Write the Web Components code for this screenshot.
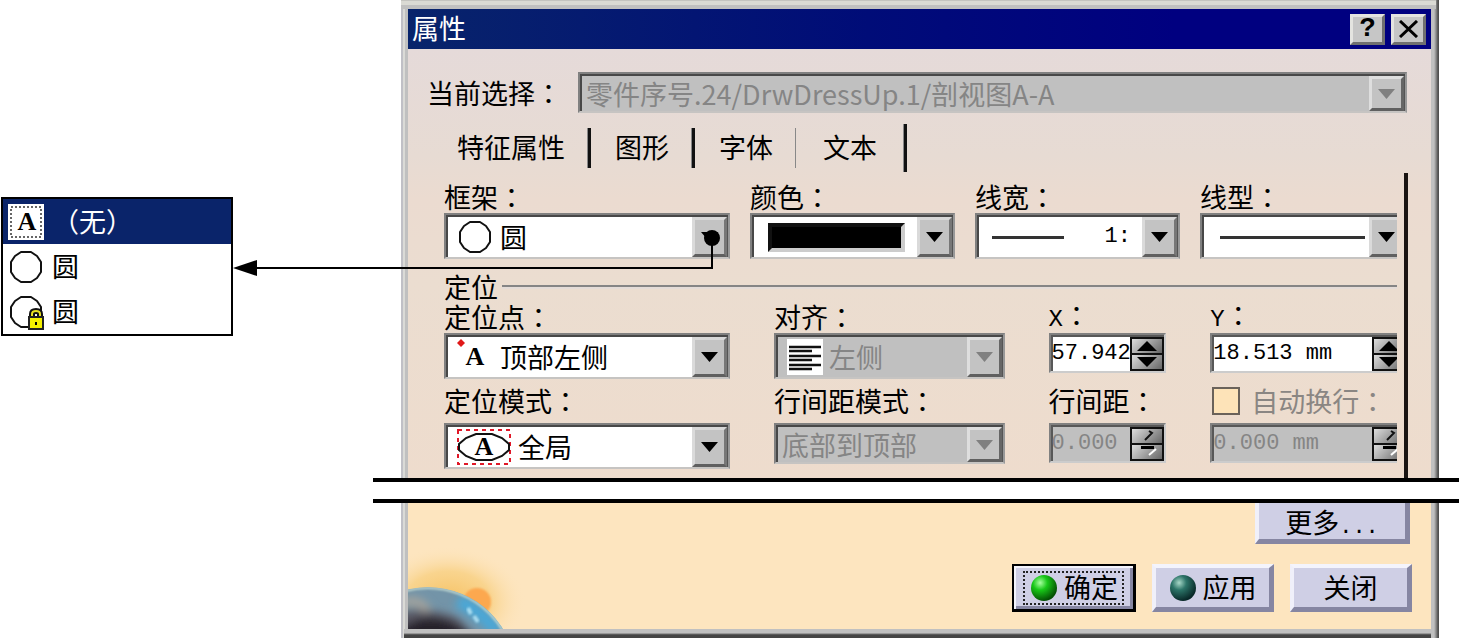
<!DOCTYPE html>
<html lang="zh-Hans">
<head>
<meta charset="utf-8">
<title>属性</title>
<style>
  body { margin: 0; background: #fff; color: #000; font: 27px/28px "Noto Sans CJK SC", "Noto Sans CJK TC", sans-serif; }
</style>
</head>
<body>
<property-figure></property-figure>

<template id="figure-tpl">
  <style>
    :host { display: flex; position: relative; min-height: 100vh; align-items: flex-start; overflow: hidden; }
    .side { flex: 0 0 401px; padding: 197px 0 0 1px; box-sizing: border-box; }
    property-dialog { flex: 1; min-width: 0; margin-right: 20px; }
    .arrow { position: absolute; left: 232px; top: 226px; pointer-events: none; }
  </style>
  <div class="side"><frame-list></frame-list></div>
  <property-dialog></property-dialog>
  <svg class="arrow" width="490" height="52" aria-hidden="true">
    <path d="M480 12V42H20" fill="none" stroke="#000" stroke-width="2"/>
    <path d="M1 42L25 34V50Z"/>
    <circle cx="480" cy="12" r="8"/>
  </svg>
</template>

<template id="list-tpl">
  <style>
    :host { display: block; width: 232px; box-sizing: border-box; border: 2px solid #000; background: #fff; }
    ul { margin: 0; padding: 0; list-style: none; }
    li { display: flex; align-items: center; gap: 8px; height: 45px; padding-left: 5px; }
    li span { padding-bottom: 2px; }
    li[aria-selected="true"] { background: #0a246a; color: #fff; }
  </style>
  <ul role="listbox" aria-label="框架">
    <li role="option" aria-selected="true"><ui-icon name="none"></ui-icon><span>（无）</span></li>
    <li role="option" aria-selected="false"><ui-icon name="circle"></ui-icon><span>圆</span></li>
    <li role="option" aria-selected="false"><ui-icon name="locked"></ui-icon><span>圆</span></li>
  </ul>
</template>

<template id="dialog-tpl">
  <style>
    :host { display: block; }
    .frame { padding: 0 8px 0 7px; background: linear-gradient(90deg, #c0c0c6 0 2px, #dadad6 2px 4px, #c0c0c0 4px calc(100% - 5px), #8c8c8c calc(100% - 3px), #505050 calc(100% - 1px)); }
    .head { height: 9px; margin: 0 -5px 0 -7px; background: linear-gradient(#c4c4c0 0 1px, #dadad4 1px 5px, #c0c0c0 5px); }
    header { display: flex; align-items: center; gap: 6px; height: 40px; padding: 0 5px 0 4px; background: linear-gradient(90deg, #08246b, #000c78 45%, #000080 75%); color: #fff; }
    h1 { flex: 1; margin: 0; padding-bottom: 2px; font-size: 27px; line-height: 28px; font-weight: 400; }
    header button { display: grid; place-items: center; width: 35px; height: 31px; padding: 0; border: 3px solid; border-color: #e4e4e0 #707070 #707070 #e4e4e0; background: #c6c6c6; color: #000; font: 700 27px/24px "Liberation Mono", monospace; }
    .body { padding: 23px 23px 0 0; background: linear-gradient(#e5dad9, #e7dbd3 25%, #ebdbd0 35%, #ebddd0 55%, #eedccd); }
    .current { margin: 0 1px 0 19px; }
    nav { display: flex; align-items: center; height: 48px; margin: 11px 0 1px 49px; }
    nav button { padding: 0 0 2px; border: 0; background: none; color: #000; font: inherit; }
    nav i { width: 4px; height: 40px; margin: 0 24px 0 22px; box-sizing: border-box; border-left: 1px solid #888; background: #111; }
    nav i.thin { background: none; }
    nav i.last { height: 48px; margin: 0 0 0 26px; }
    .panel { border-right: 4px solid #1a1412; padding: 10px 7px 9px 36px; }
    .row { display: grid; column-gap: 44px; grid-template-columns: 286px 231fr 118fr 187fr; }
    .row.a { column-gap: 20px; grid-template-columns: 286px 205fr 205fr 197fr; }
    .row.c { margin-top: 8px; --label-gap: 8px; }
    h2 { display: flex; align-items: center; gap: 4px; margin: 14px 0 2px; font-size: 27px; line-height: 28px; font-weight: 400; }
    h2::after { content: ""; flex: 1; height: 2px; background: #858585; border-bottom: 2px solid #e4dcd8; }
    .break { height: 17px; margin: 0 -20px 0 -28px; border: solid #000; border-width: 4px 0; background: #fff; position: relative; }
    footer { position: relative; padding: 0 19px 17px; background: #fde5bf; }
    .bottom { height: 9px; margin: 0 0 0 -4px; background: linear-gradient(#c0c0c0 0 4px, #707070 5px, #444 6px); }
    .more, .actions { display: flex; justify-content: flex-end; gap: 16px; position: relative; }
    .more { height: 41px; margin-bottom: 20px; padding-right: 2px; }
    .planet { position: absolute; left: 0; bottom: 0; }
    .swatch { height: 21px; margin: 0 12px 0 14px; border: 4px solid; border-color: #111 #ccc #ccc #111; background: #000; outline: 0; }
    .line { height: 3px; background: #333; }
    .line.short { width: 72px; margin-left: 13px; }
    .line.long { margin: 0 4px 0 16px; }
  </style>
  <section class="frame">
    <div class="head"></div>
    <header><h1>属性</h1>
      <button aria-label="帮助">?</button>
      <button aria-label="关闭窗口"><svg width="20" height="18" viewBox="0 0 20 18"><path d="M1 1L18 17M18 1L1 17" stroke="#000" stroke-width="3"/></svg></button>
    </header>
    <div class="body">
      <combo-field class="current" inline disabled label="当前选择" value="零件序号.24/DrwDressUp.1/剖视图A-A"></combo-field>
      <nav>
        <button>特征属性</button><i></i><button>图形</button><i></i><button>字体</button><i class="thin"></i><button>文本</button><i class="last"></i>
      </nav>
      <div class="panel">
        <div class="row a">
          <combo-field label="框架" value="圆" style="--start: 52px"><ui-icon name="circle" style="margin-left: 9px"></ui-icon></combo-field>
          <combo-field label="颜色" value=""><div class="swatch"></div></combo-field>
          <combo-field label="线宽" value="1:" right><div class="line short"></div></combo-field>
          <combo-field label="线型" value="" clipped><div class="line long"></div></combo-field>
        </div>
        <h2>定位</h2>
        <div class="row">
          <combo-field label="定位点" value="顶部左侧" style="--start: 52px"><ui-icon name="anchor" style="margin-left: 8px"></ui-icon></combo-field>
          <combo-field label="对齐" value="左侧" disabled style="--start: 51px"><ui-icon name="align" style="margin-left: 9px"></ui-icon></combo-field>
          <spin-field label="X" value="57.942"></spin-field>
          <spin-field label="Y" value="18.513 mm" clipped></spin-field>
        </div>
        <div class="row c">
          <combo-field label="定位模式" value="全局" style="--start: 70px"><ui-icon name="global" style="margin-left: 8px"></ui-icon></combo-field>
          <combo-field label="行间距模式" value="底部到顶部" disabled compact></combo-field>
          <spin-field label="行间距" value="0.000" disabled></spin-field>
          <spin-field label="自动换行" value="0.000 mm" disabled checkable clipped></spin-field>
        </div>
      </div>
    </div>
  </section>
  <div class="break"></div>
  <section class="frame">
    <footer>
      <svg class="planet" width="160" height="127" viewBox="0 0 160 127" aria-hidden="true">
        <defs>
          <radialGradient id="glow"><stop offset="0" stop-color="#f6c060"/><stop offset=".55" stop-color="#f8d082" stop-opacity=".8"/><stop offset="1" stop-color="#fde5bf" stop-opacity="0"/></radialGradient>
          <filter id="soft" x="-40%" y="-40%" width="180%" height="180%"><feGaussianBlur stdDeviation="4"/></filter>
          <filter id="edge" x="-20%" y="-20%" width="140%" height="140%"><feGaussianBlur stdDeviation="1"/></filter>
          <clipPath id="disc"><circle cx="20" cy="173" r="88"/></clipPath>
        </defs>
        <ellipse cx="40" cy="100" rx="78" ry="56" fill="url(#glow)"/>
        <circle cx="69" cy="100" r="14" fill="#fca850" filter="url(#edge)"/>
        <g clip-path="url(#disc)">
          <circle cx="20" cy="173" r="88" fill="#7394a8"/>
          <g filter="url(#soft)">
            <path d="M-10 110Q20 104 50 116L72 140H-10Z" fill="#5a5864"/>
            <path d="M-10 128Q10 112 30 116Q50 118 68 140H-10Z" fill="#26242c"/>
            <path d="M-6 102Q8 94 20 108" fill="none" stroke="#a8a49c" stroke-width="8"/>
            <path d="M50 99Q72 108 90 130" fill="none" stroke="#4aa8d8" stroke-width="14"/>
          </g>
          <path d="M60 106L63 112M66 114L70 120" fill="none" stroke="#a8dcf0" stroke-width="4" filter="url(#edge)"/>
          <circle cx="20" cy="173" r="87" fill="none" stroke="#c4dcd4" stroke-width="2" filter="url(#edge)"/>
        </g>
      </svg>
      <div class="more"><push-button style="--w: 155px; --h: 41px; --top: 0px; --drop: 10px">更多<span style="font: 22px/28px 'Liberation Mono', monospace">...</span></push-button></div>
      <div class="actions">
        <push-button default style="--w: 124px"><ui-icon slot="icon" name="ball-on"></ui-icon>确定</push-button>
        <push-button style="--w: 122px"><ui-icon slot="icon" name="ball-off"></ui-icon>应用</push-button>
        <push-button style="--w: 122px">关闭</push-button>
      </div>
    </footer>
    <div class="bottom"></div>
  </section>
</template>

<template id="button-tpl">
  <style>
    :host { display: block; }
    button { display: flex; align-items: center; justify-content: center; box-sizing: border-box; width: var(--w); height: var(--h, 48px); padding: var(--drop, 0) 0 0; border: 4px solid; border-width: var(--top, 4px) 5px 5px 4px; border-color: #f4f4fc #8686a2 #8686a2 #f0f0fa; background: #cfcfe5; color: #000; font: inherit; }
    .in { display: flex; align-items: center; gap: 6px; }
    .text { padding-bottom: 2px; }
    :host([default]) button { border: 2px solid #000; border-width: 2px 3px 3px 2px; box-shadow: inset 2px 2px #f4f4fc, inset -3px -3px #8686a2; }
    :host([default]) .in { padding: 0 4px 0 5px; outline: 2px dotted #222; }
  </style>
  <button><span class="in"><slot name="icon"></slot><span class="text"><slot></slot></span></span></button>
</template>

<template id="combo-tpl">
  <style>
    :host { display: block; }
    label { display: block; white-space: nowrap; margin-bottom: var(--label-gap, 2px); }
    b { font: inherit; font-family: "Noto Sans CJK TC", sans-serif; }
    .box { display: grid; grid-template-columns: minmax(0, 1fr) 35px; height: 46px; box-sizing: border-box; border: 2px solid; border-color: #808080 #989898 #c6c4c2 #808080; background: #fff; box-shadow: inset 2px 2px #484848, inset -1px 0 #555; padding: 2px 1px 0 2px; }
    .face { grid-area: 1 / 1; display: grid; align-items: center; }
    select { grid-area: 1 / 1 / 2 / 3; appearance: none; min-width: 0; border: 0; margin: 0; padding: 0 37px 0 var(--start, 4px); background: none; color: #000; font: inherit; line-height: 40px; outline: 0; }
    .arrow { grid-area: 1 / 2; display: grid; place-items: center; background: #c3c3c3; border: 3px solid; border-color: #d8d8d8 #777 #606060 #dadada; pointer-events: none; }
    :host([disabled]) .box { background: #c0c0c0; }
    :host([disabled]) select { color: #858585; opacity: 1; }
    :host([disabled]) .arrow { border-color: #dedede #666 #606060 #dedede; }
    :host([disabled]) .arrow path { fill: #808080; }
    :host([compact]) .box { height: 41px; }
    :host([compact]) select, :host([inline]) select { line-height: 35px; }
    :host([clipped]) .clip { overflow: hidden; }
    :host([clipped]) .box { margin-right: -10px; }
    :host([right]) select { text-align-last: right; padding-right: 46px; font: 22px/28px "Liberation Mono", monospace; }
    :host([inline]) { display: flex; align-items: center; gap: 16px; }
    :host([inline]) label { margin: 0; }
    :host([inline]) .clip { flex: 1; }
    :host([inline]) .box { height: 41px; }
  </style>
  <label for="c"><span></span><b lang="zh-Hant">：</b></label>
  <div class="clip"><div class="box">
    <div class="face"><slot></slot></div>
    <div class="arrow"><svg width="17" height="10" viewBox="0 0 17 10"><path d="M0 0H17L8.500 10Z"/></svg></div>
    <select id="c"><option></option></select>
  </div></div>
</template>

<template id="spin-tpl">
  <style>
    :host { display: block; }
    .cap { display: flex; align-items: center; height: 28px; margin-bottom: var(--label-gap, 2px); white-space: nowrap; }
    .latin { font: 24px/28px "Liberation Mono", monospace; }
    b { font: inherit; font-family: "Noto Sans CJK TC", sans-serif; }
    .check { display: none; appearance: none; width: 28px; height: 28px; margin: 0 11px 0 2px; box-sizing: border-box; border: 2px solid #6a625a; background: #fde3b8; }
    :host([checkable]) .check { display: block; }
    :host([checkable]) label { color: #8a8683; }
    .box { display: flex; height: 40px; box-sizing: border-box; border: 2px solid; border-color: #808080 #ccc #ccc #808080; box-shadow: inset 2px 2px #585858; padding: 2px 0 0 1px; background: #fff; }
    :host([clipped]) .clip { overflow: hidden; }
    :host([clipped]) .box { margin-right: -11px; }
    input[type="text"] { flex: 1; width: 0; min-width: 0; height: 32px; padding: 0; border: 0; background: none; color: #000; outline: 0; font: 22px/28px "Liberation Mono", monospace; }
    .spin { flex: 0 0 34px; display: grid; grid-template-rows: 1fr 1fr; gap: 2px; box-sizing: border-box; height: 34px; padding: 2px; background: #111; }
    .spin button { display: grid; place-items: center; padding: 0; border: 0; min-height: 0; background: linear-gradient(135deg, #ddd, #a8a8a8 45%, #666); }
    svg { display: block; }
    .off { display: none; }
    :host([disabled]) .box { background: #c0c0c0; }
    :host([disabled]) input { color: #858585; }
    :host([disabled]) .on { display: none; }
    :host([disabled]) .off { display: block; }
  </style>
  <div class="cap"><input class="check" type="checkbox" id="k"><label for="v"><span></span><b lang="zh-Hant">：</b></label></div>
  <div class="clip"><div class="box">
    <input type="text" id="v">
    <div class="spin">
      <button aria-label="增加"><svg width="24" height="12" viewBox="0 0 24 12"><path class="on" d="M12 1L22 11H2Z"/><path class="off" d="M10 10L17 3L14 1" fill="none" stroke="#111" stroke-width="2"/></svg></button>
      <button aria-label="减少"><svg width="24" height="12" viewBox="0 0 24 12"><path class="on" d="M12 11L22 1H2Z"/><g class="off"><path d="M6 0H19V3H6Z"/><path d="M21 3L14 9" stroke="#fff" stroke-width="2"/></g></svg></button>
    </div>
  </div></div>
</template>

<script>
  const clone = id => document.getElementById(id).content.cloneNode(true);

  // Base for elements whose shadow tree comes straight from a template.
  const fromTemplate = id => class extends HTMLElement {
    constructor() {
      super();
      this.attachShadow({ mode: 'open' }).append(clone(id));
    }
  };

  const letter = (x, y) => `<text x="${x}" y="${y}" text-anchor="middle" font-family="Liberation Serif, serif" font-weight="700" font-size="26">A</text>`;
  const ring = '<path d="M13 3H23L29 7L33 13V23L29 29L23 33H13L7 29L3 23V13L7 7Z" fill="#fff" stroke="#111" stroke-width="2" stroke-linejoin="round"/>';
  const ball = (a, b, c) => `<defs><radialGradient id="g" cx=".35" cy=".3" r=".7"><stop offset="0" stop-color="${a}"/><stop offset=".4" stop-color="${b}"/><stop offset="1" stop-color="${c}"/></radialGradient></defs><circle cx="14" cy="14" r="13" fill="url(#g)"/>`;
  const icons = {
    none: [36, 36, `<rect width="36" height="36" fill="#fff"/><rect x="3" y="3" width="30" height="30" fill="none" stroke="#666" stroke-width="2" stroke-dasharray="2 2"/>${letter(19, 26)}`],
    circle: [36, 36, ring],
    locked: [36, 36, ring + '<path d="M24 24V20Q24 17 28 17Q32 17 32 20V24" fill="none" stroke="#111" stroke-width="6"/><path d="M24 24V20Q24 17 28 17Q32 17 32 20V24" fill="none" stroke="#e8e020" stroke-width="2"/><rect x="21" y="23" width="14" height="12" fill="#f4f000" stroke="#222" stroke-width="2"/><rect x="27" y="28" width="2" height="3"/>'],
    anchor: [36, 36, `<path d="M5 0L9 4L5 8L1 4Z" fill="#e01818"/>${letter(19, 26)}`],
    align: [36, 36, '<rect width="36" height="36" fill="#fff"/><path d="M2 8H34M2 12H25M2 17H34M2 21H25M2 26H34M2 30H25" stroke="#111" stroke-width="2.500"/>'],
    global: [56, 38, `<rect x="2" y="2" width="52" height="34" fill="none" stroke="#e01828" stroke-width="2" stroke-dasharray="4 4"/><path d="M20 6H36L46 10L53 16V22L46 28L36 32H20L10 28L3 22V16L10 10Z" fill="none" stroke="#111" stroke-width="2"/>${letter(28, 27)}`],
    'ball-on': [28, 28, ball('#a8ffa0', '#18c818', '#045004')],
    'ball-off': [28, 28, ball('#a8d8c8', '#2c7468', '#082828')]
  };

  customElements.define('ui-icon', class extends HTMLElement {
    constructor() { super(); this.attachShadow({ mode: 'open' }); }
    connectedCallback() {
      const [w, h, art] = icons[this.getAttribute('name')];
      this.shadowRoot.innerHTML = `<style>:host{display:block;flex:none;color:#000}svg{display:block}</style><svg width="${w}" height="${h}" viewBox="0 0 ${w} ${h}" aria-hidden="true">${art}</svg>`;
    }
  });

  customElements.define('combo-field', class extends fromTemplate('combo-tpl') {
    connectedCallback() {
      const root = this.shadowRoot;
      root.querySelector('label span').textContent = this.getAttribute('label');
      root.querySelector('option').textContent = this.getAttribute('value');
      root.querySelector('select').disabled = this.hasAttribute('disabled');
    }
  });

  customElements.define('spin-field', class extends fromTemplate('spin-tpl') {
    connectedCallback() {
      const root = this.shadowRoot, name = this.getAttribute('label'), text = root.querySelector('label span');
      text.textContent = name;
      text.className = /^[A-Z]$/.test(name) ? 'latin' : '';
      root.getElementById('v').value = this.getAttribute('value');
      root.getElementById('v').setAttribute('aria-label', name);
      if (this.hasAttribute('checkable')) root.querySelector('label').htmlFor = 'k';
      else root.getElementById('k').remove();
      root.querySelectorAll('input, button').forEach(el => { el.disabled = this.hasAttribute('disabled'); });
    }
  });

  customElements.define('push-button', fromTemplate('button-tpl'));
  customElements.define('frame-list', fromTemplate('list-tpl'));
  customElements.define('property-dialog', fromTemplate('dialog-tpl'));
  customElements.define('property-figure', fromTemplate('figure-tpl'));
</script>
</body>
</html>
